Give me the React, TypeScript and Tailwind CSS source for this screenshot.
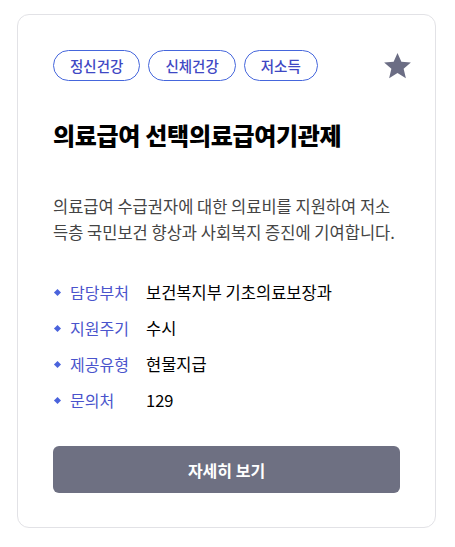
export default function App() {
  const tags = ["정신건강", "신체건강", "저소득"];
  const infos = [
    { label: "담당부처", value: "보건복지부 기초의료보장과" },
    { label: "지원주기", value: "수시" },
    { label: "제공유형", value: "현물지급" },
    { label: "문의처", value: "129" },
  ];

  return (
    <div
      className="min-h-screen bg-white pl-[17px] pt-[14px]"
      style={{ fontFamily: '"Noto Sans CJK KR", "Noto Sans", sans-serif' }}
    >
      <div className="w-[419px] rounded-[12px] border border-[#e2e2e6] bg-white px-[35px] pb-[34px] pt-[35px]">
        <div className="flex items-center justify-between">
          <div className="flex gap-[8px]">
            {tags.map((tag) => (
              <span
                key={tag}
                className="flex h-[31px] items-center rounded-full border border-[#4566dc] px-[16px] text-[14.5px] font-medium text-[#3f48c4]"
              >
                {tag}
              </span>
            ))}
          </div>
          <svg width="31" height="30" viewBox="0 0 24 24" className="-mr-[13px]">
            <path
              d="M12 1.5l3.1 7.1 7.6.6-5.8 5 1.8 7.5L12 17.6l-6.7 4.1 1.8-7.5-5.8-5 7.6-.6z"
              fill="#6b6d84"
            />
          </svg>
        </div>

        <h1 className="mt-[38px] text-[24px] font-extrabold leading-[32px] tracking-[-0.3px] text-black">
          의료급여 선택의료급여기관제
        </h1>

        <p className="mt-[42px] break-all text-[16.5px] leading-[26px] text-[#444]">
          의료급여 수급권자에 대한 의료비를 지원하여 저소득층 국민보건 향상과 사회복지 증진에 기여합니다.
        </p>

        <ul className="mt-[35px] flex flex-col gap-[12px]">
          {infos.map((info) => (
            <li key={info.label} className="flex items-center leading-[24px]">
              <span className="ml-[2px] mr-[10px] h-[5px] w-[5px] rotate-45 bg-[#4a63dc]" />
              <span className="w-[76px] text-[16px] text-[#4a54cc]">{info.label}</span>
              <span className="text-[16.5px] text-black">{info.value}</span>
            </li>
          ))}
        </ul>

        <button
          type="button"
          className="mt-[34px] h-[47px] w-full rounded-[6px] bg-[#6e7082] text-[16px] font-bold text-white"
        >
          자세히 보기
        </button>
      </div>
    </div>
  );
}
